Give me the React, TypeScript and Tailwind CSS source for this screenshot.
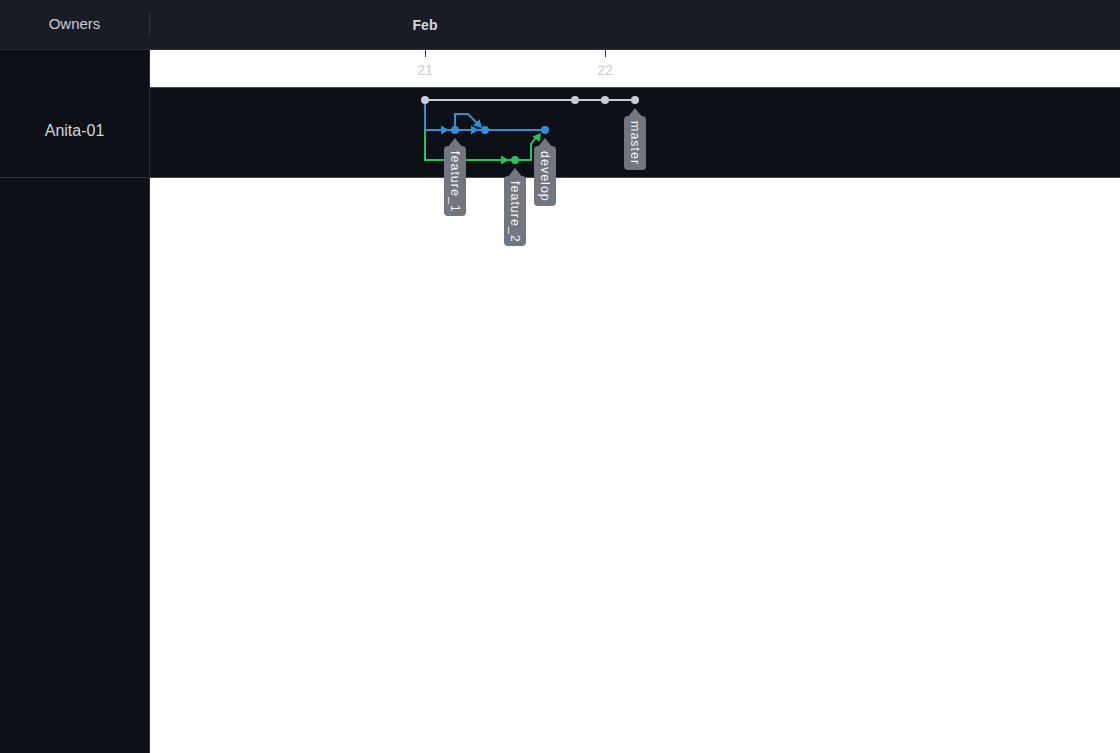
import React from "react";

const BLUE = "#2f8fd8";
const GREEN = "#22c55e";
const GRAY = "#c8ccd3";
const LABEL = "#72767f";

function Arrow({ x, y, color, angle = 0 }: { x: number; y: number; color: string; angle?: number }) {
  return (
    <polygon
      points="0,0 -8,-4.5 -8,4.5"
      fill={color}
      transform={`translate(${x},${y}) rotate(${angle})`}
    />
  );
}

function Label({ cx, tip, bottom, text }: { cx: number; tip: number; bottom: number; text: string }) {
  const top = tip + 8;
  return (
    <g>
      <path d={`M ${cx} ${tip} L ${cx + 8} ${top + 2} L ${cx - 8} ${top + 2} Z`} fill={LABEL} />
      <rect x={cx - 11} y={top} width={22} height={bottom - top} rx={4} fill={LABEL} />
      <text
        x={cx}
        y={top + 5}
        transform={`rotate(90 ${cx} ${top + 5})`}
        fontSize={12.5}
        letterSpacing={1}
        fill="#f1f2f4"
        dominantBaseline="central"
        fontFamily="'Liberation Sans', Arial, sans-serif"
      >
        {text}
      </text>
    </g>
  );
}

export default function App() {
  return (
    <div
      className="flex h-[753px] w-[1120px] flex-col overflow-hidden bg-white"
      style={{ fontFamily: "'Liberation Sans', Arial, sans-serif" }}
    >
      {/* Header */}
      <div className="flex h-[50px] shrink-0 items-center border-b border-[#2c2f37] bg-[#191c24]">
        <div className="flex w-[149px] justify-center text-[15px] text-[#c9cdd4]">Owners</div>
        <div className="h-[25px] w-px bg-[#33363e]" />
        <div className="relative h-full flex-1">
          <span className="absolute left-[275px] top-[15px] -translate-x-1/2 text-[14px] font-bold text-[#d4d7dc]">
            Feb
          </span>
        </div>
      </div>

      {/* Body */}
      <div className="flex flex-1">
        <div className="flex w-[150px] shrink-0 flex-col border-r border-[#2c2f37] bg-[#0d1017]">
          <div className="flex h-[128px] items-center justify-center border-b border-[#2c2f37] pt-[34px] text-[16px] text-[#d1d5db]">
            Anita-01
          </div>
        </div>
        <div className="relative flex-1">
          <div className="relative h-[37px] bg-white">
            <div className="absolute left-[275px] top-0 h-[7px] w-px bg-[#333]" />
            <div className="absolute left-[455px] top-0 h-[7px] w-px bg-[#333]" />
            <span className="absolute left-[275px] top-[10px] -translate-x-1/2 text-[14px] text-[#c6ceda]">21</span>
            <span className="absolute left-[455px] top-[10px] -translate-x-1/2 text-[14px] text-[#c6ceda]">22</span>
          </div>
          <div className="h-[91px] border-y border-[#4a4d55] bg-[#0d1017]" />

          <svg className="absolute left-0 top-0 overflow-visible" width={970} height={703}>
            <g transform="translate(-150,-49)" strokeWidth={2} fill="none">
              {/* master */}
              <line x1={425} y1={99} x2={635} y2={99} stroke={GRAY} />
              {/* blue branch */}
              <polyline points="425,99 425,129 545,129" stroke={BLUE} />
              <polyline points="455,129 455,113 468,113 479,124" stroke={BLUE} />
              {/* green branch */}
              <polyline points="425,129 425,159 515,159" stroke={GREEN} />
              <polyline points="515,159 531,159 531,143 538,134" stroke={GREEN} />

              <Arrow x={449} y={129} color={BLUE} />
              <Arrow x={479} y={129} color={BLUE} />
              <Arrow x={482} y={127} color={BLUE} angle={45} />
              <Arrow x={509} y={159} color={GREEN} />
              <Arrow x={541} y={132} color={GREEN} angle={-52} />

              {/* dots */}
              <circle cx={425} cy={99} r={4} fill={GRAY} stroke="none" />
              <circle cx={575} cy={99} r={4} fill={GRAY} stroke="none" />
              <circle cx={605} cy={99} r={4} fill={GRAY} stroke="none" />
              <circle cx={635} cy={99} r={4} fill={GRAY} stroke="none" />
              <circle cx={455} cy={129} r={4} fill={BLUE} stroke="none" />
              <circle cx={485} cy={129} r={4} fill={BLUE} stroke="none" />
              <circle cx={545} cy={129} r={4} fill={BLUE} stroke="none" />
              <circle cx={515} cy={159} r={4} fill={GREEN} stroke="none" />

              <Label cx={455} tip={137} bottom={215} text="feature_1" />
              <Label cx={515} tip={167} bottom={245} text="feature_2" />
              <Label cx={545} tip={137} bottom={205} text="develop" />
              <Label cx={635} tip={107} bottom={169} text="master" />
            </g>
          </svg>
        </div>
      </div>
    </div>
  );
}
